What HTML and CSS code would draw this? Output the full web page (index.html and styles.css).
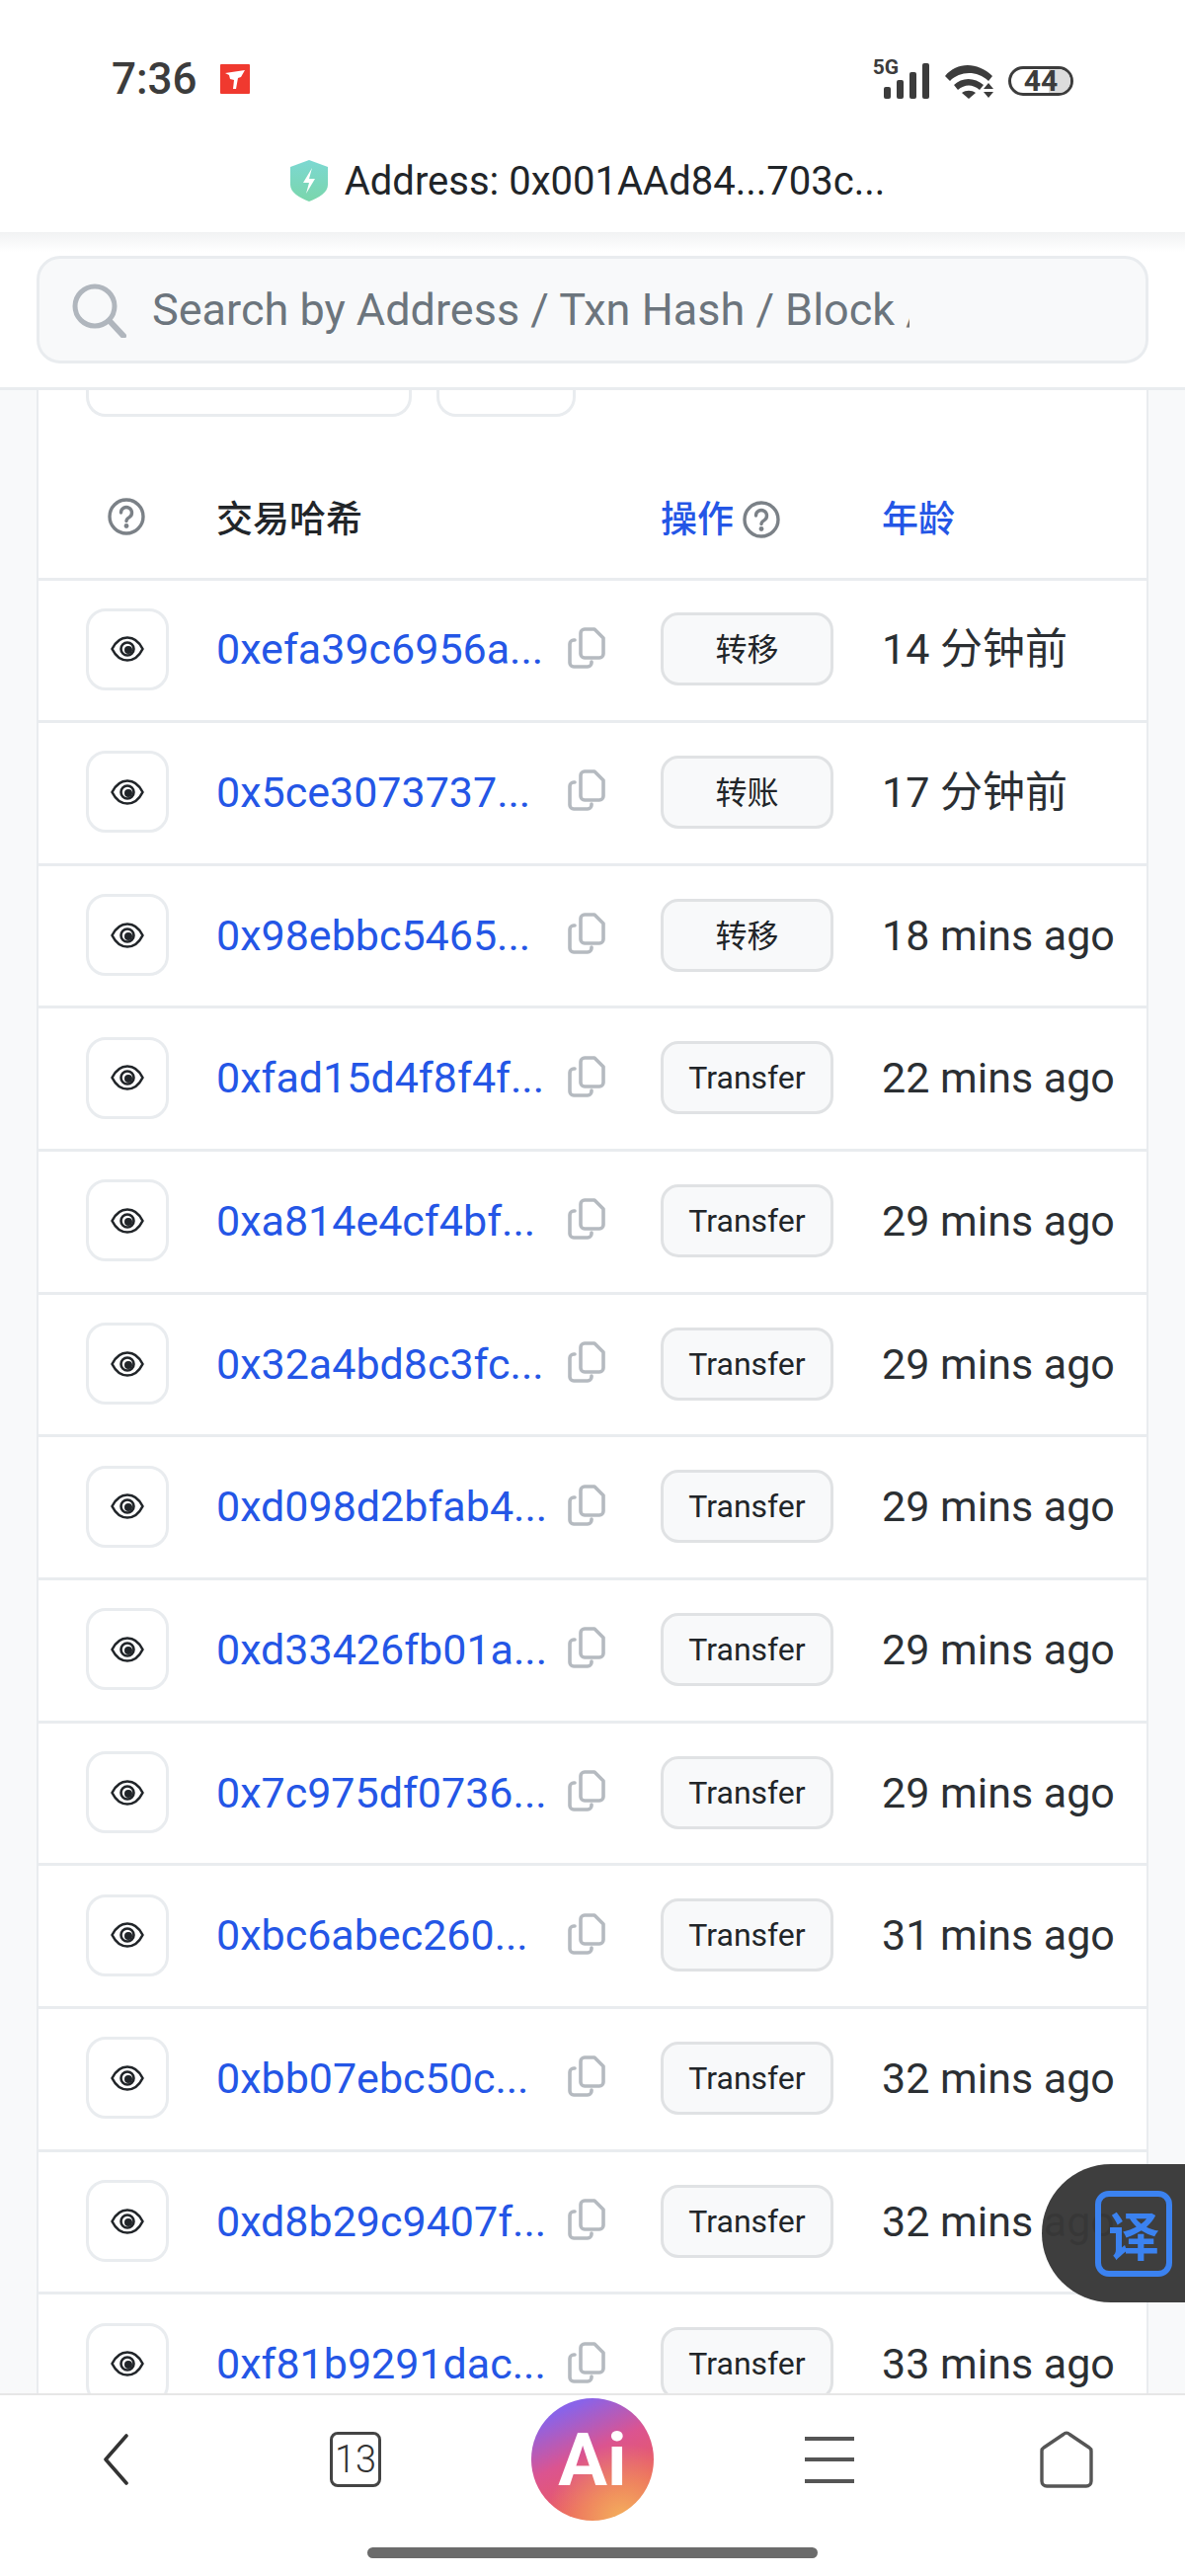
FILE: index.html
```html
<!DOCTYPE html>
<html lang="zh">
<head>
    <meta charset="UTF-8">
    <meta name="viewport" content="width=device-width, initial-scale=1.0">
    <title>Address: 0x001AAd84...703c...</title>
    <link rel="stylesheet" href="styles.css">
</head>
<body>

    <!-- shared icons -->
    <svg class="defs" width="0" height="0">
        <symbol id="eye" viewBox="0 0 34 28">
            <path d="M1.500 14C5 7 10.500 2.500 17 2.500S29 7 32.500 14C29 21 23.500 25.500 17 25.500S5 21 1.500 14Z" fill="none" stroke="currentColor" stroke-width="2.600" stroke-linejoin="round"/>
            <circle cx="17" cy="14" r="6.500" fill="none" stroke="currentColor" stroke-width="2.600"/>
            <circle cx="18" cy="15" r="4" fill="currentColor"/>
        </symbol>
        <symbol id="copy" viewBox="0 0 38 42">
            <path d="M13 6a4 4 0 0 1 4-4h10l9 9v16a4 4 0 0 1-4 4H17a4 4 0 0 1-4-4Z" fill="none" stroke="currentColor" stroke-width="3.600" stroke-linejoin="round"/>
            <path d="M7 13H6a4 4 0 0 0-4 4v19a4 4 0 0 0 4 4h14a4 4 0 0 0 4-4v-1" fill="none" stroke="currentColor" stroke-width="3.600" stroke-linecap="round"/>
        </symbol>
        <symbol id="help" viewBox="0 0 38 38">
            <circle cx="19" cy="19" r="17" fill="none" stroke="currentColor" stroke-width="3.400"/>
            <path d="M13.500 15a5.500 5.500 0 1 1 8.500 4.600c-1.800 1.100-3 2-3 3.900" fill="none" stroke="currentColor" stroke-width="3.400" stroke-linecap="round"/>
            <circle cx="19" cy="28.500" r="2.400" fill="currentColor"/>
        </symbol>
    </svg>

    <header class="topbar">
        <div class="status">
            <div class="status-left">
                <span class="clock">7:36</span>
                <svg class="notif" viewBox="0 0 30 30">
                    <rect width="30" height="30" rx="1" fill="#f0392f"/>
                    <path d="M5 9l20-3-4 7-3 1-2 11-3 0 1-9-4-1-1-4-4-2Z" fill="#fff"/>
                </svg>
            </div>
            <div class="status-right">
                <span class="net">5G</span>
                <div class="bars">
                    <i class="bar b1"></i>
                    <i class="bar b2"></i>
                    <i class="bar b3"></i>
                    <i class="bar b4"></i>
                </div>
                <svg class="wifi" viewBox="0 0 50 37">
                    <path d="M0 14C12 0 32-1 48 14l-4 5C32 8 15 9 5 19Z" fill="#3c3c3c"/>
                    <path d="M9 23c8-8 21-8 30 0l-4 5c-7-6-15-6-22 0Z" fill="#3c3c3c"/>
                    <path d="M17 31c4-3 10-3 14 0l-7 6Z" fill="#3c3c3c"/>
                    <path d="M44 21l5 6H39ZM39 30h10l-5 6Z" fill="#3c3c3c"/>
                </svg>
                <div class="battery"><span class="battery-fill"></span><b>44</b></div>
            </div>
        </div>
        <div class="pagetitle">
            <svg class="shield" viewBox="0 0 38 42">
                <defs>
                    <linearGradient id="sh" x1="0" y1="0" x2="0" y2="1">
                        <stop offset="0" stop-color="#7cd8d2"/>
                        <stop offset="1" stop-color="#7ad6ab"/>
                    </linearGradient>
                </defs>
                <path d="M19 0l19 7v18c0 8-9 13-19 17C9 38 0 33 0 25V7Z" fill="url(#sh)"/>
                <path d="M22 8l-9 15h6l-3 11 9-15h-6Z" fill="#fff"/>
            </svg>
            <span>Address: 0x001AAd84...703c...</span>
        </div>
    </header>

    <div class="searchbar">
        <div class="searchbox">
            <svg class="searchicon" viewBox="0 0 56 56">
                <circle cx="24" cy="24" r="20" fill="none" stroke="#b0b6bd" stroke-width="5"/>
                <path d="M39 39l14 15" fill="none" stroke="#b0b6bd" stroke-width="6" stroke-linecap="round"/>
            </svg>
            <span class="placeholder">Search by Address / Txn Hash / Block /</span>
        </div>
    </div>

    <main class="content">
        <div class="card">
            <div class="filters">
                <span class="pill pill-wide"></span>
                <span class="pill pill-small"></span>
            </div>

            <div class="row row-head">
                <div class="cell-eye"><svg class="help help-first"><use href="#help"/></svg></div>
                <div class="th">交易哈希</div>
                <div class="th th-link">操作 <svg class="help"><use href="#help"/></svg></div>
                <div class="th th-link">年龄</div>
            </div>

            <div class="row">
                <div class="cell-eye"><span class="eyebtn"><svg class="eye"><use href="#eye"/></svg></span></div>
                <div class="cell-hash"><a class="hash">0xefa39c6956a...</a><svg class="copy"><use href="#copy"/></svg></div>
                <div><span class="badge badge-zh">转移</span></div>
                <div class="age age-zh">14 分钟前</div>
            </div>
            <div class="row">
                <div class="cell-eye"><span class="eyebtn"><svg class="eye"><use href="#eye"/></svg></span></div>
                <div class="cell-hash"><a class="hash">0x5ce3073737...</a><svg class="copy"><use href="#copy"/></svg></div>
                <div><span class="badge badge-zh">转账</span></div>
                <div class="age age-zh">17 分钟前</div>
            </div>
            <div class="row">
                <div class="cell-eye"><span class="eyebtn"><svg class="eye"><use href="#eye"/></svg></span></div>
                <div class="cell-hash"><a class="hash">0x98ebbc5465...</a><svg class="copy"><use href="#copy"/></svg></div>
                <div><span class="badge badge-zh">转移</span></div>
                <div class="age">18 mins ago</div>
            </div>
            <div class="row">
                <div class="cell-eye"><span class="eyebtn"><svg class="eye"><use href="#eye"/></svg></span></div>
                <div class="cell-hash"><a class="hash">0xfad15d4f8f4f...</a><svg class="copy"><use href="#copy"/></svg></div>
                <div><span class="badge">Transfer</span></div>
                <div class="age">22 mins ago</div>
            </div>
            <div class="row">
                <div class="cell-eye"><span class="eyebtn"><svg class="eye"><use href="#eye"/></svg></span></div>
                <div class="cell-hash"><a class="hash">0xa814e4cf4bf...</a><svg class="copy"><use href="#copy"/></svg></div>
                <div><span class="badge">Transfer</span></div>
                <div class="age">29 mins ago</div>
            </div>
            <div class="row">
                <div class="cell-eye"><span class="eyebtn"><svg class="eye"><use href="#eye"/></svg></span></div>
                <div class="cell-hash"><a class="hash">0x32a4bd8c3fc...</a><svg class="copy"><use href="#copy"/></svg></div>
                <div><span class="badge">Transfer</span></div>
                <div class="age">29 mins ago</div>
            </div>
            <div class="row">
                <div class="cell-eye"><span class="eyebtn"><svg class="eye"><use href="#eye"/></svg></span></div>
                <div class="cell-hash"><a class="hash">0xd098d2bfab4...</a><svg class="copy"><use href="#copy"/></svg></div>
                <div><span class="badge">Transfer</span></div>
                <div class="age">29 mins ago</div>
            </div>
            <div class="row">
                <div class="cell-eye"><span class="eyebtn"><svg class="eye"><use href="#eye"/></svg></span></div>
                <div class="cell-hash"><a class="hash">0xd33426fb01a...</a><svg class="copy"><use href="#copy"/></svg></div>
                <div><span class="badge">Transfer</span></div>
                <div class="age">29 mins ago</div>
            </div>
            <div class="row">
                <div class="cell-eye"><span class="eyebtn"><svg class="eye"><use href="#eye"/></svg></span></div>
                <div class="cell-hash"><a class="hash">0x7c975df0736...</a><svg class="copy"><use href="#copy"/></svg></div>
                <div><span class="badge">Transfer</span></div>
                <div class="age">29 mins ago</div>
            </div>
            <div class="row">
                <div class="cell-eye"><span class="eyebtn"><svg class="eye"><use href="#eye"/></svg></span></div>
                <div class="cell-hash"><a class="hash">0xbc6abec260...</a><svg class="copy"><use href="#copy"/></svg></div>
                <div><span class="badge">Transfer</span></div>
                <div class="age">31 mins ago</div>
            </div>
            <div class="row">
                <div class="cell-eye"><span class="eyebtn"><svg class="eye"><use href="#eye"/></svg></span></div>
                <div class="cell-hash"><a class="hash">0xbb07ebc50c...</a><svg class="copy"><use href="#copy"/></svg></div>
                <div><span class="badge">Transfer</span></div>
                <div class="age">32 mins ago</div>
            </div>
            <div class="row">
                <div class="cell-eye"><span class="eyebtn"><svg class="eye"><use href="#eye"/></svg></span></div>
                <div class="cell-hash"><a class="hash">0xd8b29c9407f...</a><svg class="copy"><use href="#copy"/></svg></div>
                <div><span class="badge">Transfer</span></div>
                <div class="age">32 mins ago</div>
            </div>
            <div class="row">
                <div class="cell-eye"><span class="eyebtn"><svg class="eye"><use href="#eye"/></svg></span></div>
                <div class="cell-hash"><a class="hash">0xf81b9291dac...</a><svg class="copy"><use href="#copy"/></svg></div>
                <div><span class="badge">Transfer</span></div>
                <div class="age">33 mins ago</div>
            </div>
        </div>

        <div class="translate"><span class="translate-box">译</span></div>
    </main>

    <nav class="bottomnav">
        <div class="navicons">
            <svg class="nav-back" viewBox="0 0 26 52">
                <path d="M24 2L3 26l21 24" fill="none" stroke="#333" stroke-width="3.600" stroke-linecap="round" stroke-linejoin="round"/>
            </svg>
            <span class="nav-tabs">13</span>
            <span class="nav-ai">Ai</span>
            <div class="nav-menu"><i></i><i></i><i></i></div>
            <svg class="nav-home" viewBox="0 0 54 58">
                <path d="M24 3.500a4 4 0 0 1 6 0L50 17a4 4 0 0 1 2 3.500V51a5 5 0 0 1-5 5H7a5 5 0 0 1-5-5V20.500A4 4 0 0 1 4 17Z" fill="none" stroke="#555" stroke-width="3.400" stroke-linejoin="round"/>
            </svg>
        </div>
        <div class="handle"></div>
    </nav>

</body>
</html>
```

FILE: styles.css
```css
* {
    box-sizing: border-box;
}

body {
    margin: 0;
    width: 1200px;
    height: 2608px;
    overflow: hidden;
    display: flex;
    flex-direction: column;
    background-color: #f8f9fa;
    color: #212529;
    font-family: Roboto, "Noto Sans CJK SC", sans-serif;
}

.defs {
    position: absolute;
}

/* phone status + page title */
.topbar {
    height: 235px;
    flex: none;
    background-color: #fff;
}

.status {
    height: 160px;
    padding: 60px 113px 0 113px;
    display: flex;
    justify-content: space-between;
    align-items: flex-start;
}

.status-left {
    display: flex;
    align-items: center;
    gap: 23px;
    height: 40px;
}

.clock {
    font-size: 44px;
    font-weight: 500;
    color: #3c3c3c;
}

.notif {
    width: 30px;
    height: 30px;
}

.status-right {
    display: flex;
    align-items: flex-end;
    height: 40px;
}

.net {
    font-size: 21px;
    font-weight: 700;
    color: #3c3c3c;
    line-height: 16px;
    align-self: flex-start;
    margin-right: -15px;
}

.bars {
    display: flex;
    align-items: flex-end;
    gap: 6px;
    height: 36px;
}

.bar {
    width: 7px;
    border-radius: 2px;
    background-color: #3c3c3c;
}

.b1 { height: 12px; }
.b2 { height: 19px; }
.b3 { height: 27px; }
.b4 { height: 36px; }

.wifi {
    width: 50px;
    height: 37px;
    margin-left: 16px;
}

.battery {
    width: 66px;
    height: 30px;
    margin-left: 14px;
    margin-bottom: 3px;
    border: 3px solid #3c3c3c;
    border-radius: 15px;
    position: relative;
    display: flex;
    justify-content: center;
    align-items: center;
}

.battery-fill {
    position: absolute;
    right: 0;
    top: 0;
    bottom: 0;
    width: 22px;
    border-radius: 0 12px 12px 0;
    background-color: #dcdcdc;
}

.battery b {
    position: relative;
    font-size: 30px;
    line-height: 24px;
    color: #3c3c3c;
}

.pagetitle {
    display: flex;
    justify-content: center;
    align-items: center;
    gap: 17px;
    font-size: 40px;
    color: #212529;
    padding-right: 10px;
    height: 46px;
}

.shield {
    width: 38px;
    height: 42px;
}

/* search */
.searchbar {
    height: 160px;
    flex: none;
    padding: 24px 37px 0;
    background: linear-gradient(#f1f2f3, #fff 20px);
    border-bottom: 3px solid #e9ecef;
}

.searchbox {
    height: 109px;
    background-color: #f8f9fa;
    border: 3px solid #e9ecef;
    border-radius: 24px;
    display: flex;
    align-items: center;
    padding-left: 32px;
    gap: 26px;
}

.searchicon {
    width: 56px;
    height: 56px;
    flex: none;
}

.placeholder {
    width: 767px;
    overflow: hidden;
    white-space: nowrap;
    font-size: 45px;
    color: #6c757d;
}

/* table */
.content {
    flex: 1;
    position: relative;
    overflow: hidden;
    padding: 0 37px;
}

.card {
    background-color: #fff;
    border-left: 2px solid #e9ecef;
    border-right: 2px solid #e9ecef;
}

.filters {
    display: flex;
    gap: 25px;
    padding-left: 48px;
}

.pill {
    height: 27px;
    border: 3px solid #e9ecef;
    border-top: none;
    border-radius: 0 0 20px 20px;
}

.pill-wide {
    width: 330px;
}

.pill-small {
    width: 141px;
}

.row {
    display: grid;
    grid-template-columns: 180px 450px 224px 1fr;
    align-items: center;
    height: 144.67px;
    padding-bottom: 2px;
    border-bottom: 3px solid #e9ecef;
}

.row-head {
    height: 165.5px;
    padding-top: 41px;
}

.cell-eye {
    padding-left: 48px;
}

.help {
    width: 38px;
    height: 38px;
    color: #7b8187;
    vertical-align: -6px;
}

.help-first {
    display: block;
    margin-left: 22px;
}

.th {
    font-size: 37px;
    font-weight: 500;
    color: #212529;
}

.th-link {
    color: #2456e6;
}

.eyebtn {
    width: 84px;
    height: 83px;
    display: flex;
    align-items: center;
    justify-content: center;
    border: 3px solid #e9ecef;
    border-radius: 20px;
    background-color: #fff;
}

.eye {
    width: 34px;
    height: 28px;
    color: #212529;
}

.cell-hash {
    display: flex;
    align-items: center;
}

.hash {
    width: 356px;
    font-size: 43px;
    color: #2456e6;
    white-space: nowrap;
}

.copy {
    width: 38px;
    height: 42px;
    color: #b5bac0;
    margin-top: -3px;
}

.badge {
    width: 175px;
    height: 74px;
    display: flex;
    align-items: center;
    justify-content: center;
    background-color: #f8f9fa;
    border: 3px solid #e0e2e4;
    border-radius: 18px;
    font-size: 32px;
    color: #212529;
}

.badge-zh {
    padding-bottom: 4px;
}

.age {
    font-size: 43px;
    color: #2b2f33;
    white-space: nowrap;
}

.age-zh {
    margin-bottom: 8px;
}

/* floating translate button */
.translate {
    position: absolute;
    right: 0;
    top: 1796px;
    width: 145px;
    height: 140px;
    display: flex;
    align-items: center;
    justify-content: flex-end;
    padding-right: 13px;
    background-color: rgba(56, 56, 56, 0.97);
    border-radius: 70px 0 0 70px;
}

.translate-box {
    width: 78px;
    height: 87px;
    display: flex;
    align-items: center;
    justify-content: center;
    border: 6px solid #3b82f0;
    border-radius: 14px;
    font-size: 52px;
    font-weight: 700;
    color: #3b82f0;
}

/* browser bottom bar */
.bottomnav {
    height: 185px;
    flex: none;
    background-color: #fff;
    border-top: 2px solid #e6e6e6;
}

.navicons {
    height: 154px;
    display: grid;
    grid-template-columns: repeat(5, 240px);
    justify-items: center;
    align-items: center;
    padding-bottom: 24px;
}

.nav-back {
    width: 26px;
    height: 52px;
    margin-right: 6px;
}

.nav-tabs {
    width: 52px;
    height: 56px;
    border: 3px solid #444;
    border-radius: 8px;
    display: flex;
    align-items: center;
    justify-content: center;
    font-size: 38px;
    font-weight: 300;
    color: #333;
}

.nav-ai {
    width: 124px;
    height: 124px;
    border-radius: 50%;
    display: flex;
    align-items: center;
    justify-content: center;
    font-size: 74px;
    font-weight: 700;
    color: #fff;
    background: radial-gradient(circle at 75% 100%, #f4b25c 0, rgba(244, 178, 92, 0) 50%),
        linear-gradient(155deg, #8a63e8 15%, #db5490 45%, #ea5a60 75%);
}

.nav-menu {
    width: 50px;
    height: 47px;
    display: flex;
    flex-direction: column;
    justify-content: space-between;
}

.nav-menu i {
    height: 4px;
    background-color: #555;
}

.nav-home {
    width: 54px;
    height: 58px;
}

.handle {
    width: 456px;
    height: 11px;
    margin: 0 auto;
    border-radius: 6px;
    background-color: #6b6b6b;
}
```
